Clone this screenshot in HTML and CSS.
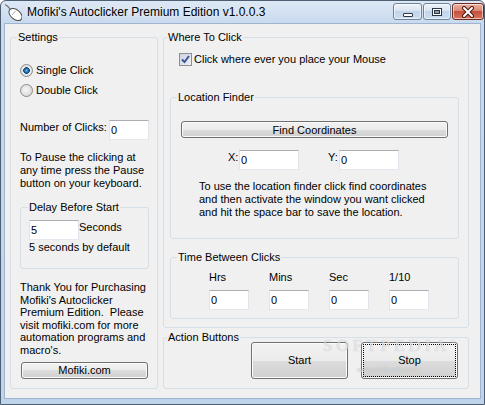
FILE: index.html
```html
<!DOCTYPE html>
<html lang="en">
<head>
  <meta charset="UTF-8" />
  <meta name="viewport" content="width=device-width, initial-scale=1.0" />
  <title>Mofiki's Autoclicker Premium Edition v1.0.0.3</title>
  <link rel="stylesheet" href="styles.css">
</head>
<body>
  <div class="window">

    <!-- Title bar -->
    <div class="titlebar">
      <svg class="app-icon" width="18" height="18" viewBox="0 0 18 18">
        <path d="M6.5 6.5 C5 4.5, 3.5 2.5, 1 1.5" fill="none" stroke="#707070" stroke-width="1.2"/>
        <ellipse cx="11.5" cy="11.5" rx="7.5" ry="4.8" transform="rotate(40 11.5 11.5)" fill="#fff" stroke="#4f4f4f"/>
        <path d="M8 12 L11.5 8" stroke="#a8a8a8"/>
      </svg>
      <span class="title">Mofiki's Autoclicker Premium Edition v1.0.0.3</span>
      <div class="caption-buttons">
        <span class="cap-btn min">
          <svg width="12" height="12" viewBox="0 0 12 12"><rect x="1.5" y="7.5" width="9" height="3" rx="0.5" fill="#fff" stroke="#2b3646"/></svg>
        </span>
        <span class="cap-btn max">
          <svg width="12" height="12" viewBox="0 0 12 12"><rect x="1.5" y="2.5" width="9" height="7" fill="#fff" stroke="#2b3646"/><rect x="3.5" y="4.5" width="5" height="3" fill="#8d9aab" stroke="#2b3646"/></svg>
        </span>
        <span class="cap-btn close">
          <svg width="14" height="12" viewBox="0 0 14 12"><path d="M3 2 L11 10 M11 2 L3 10" stroke="#4a1a12" stroke-width="4" stroke-linecap="round"/><path d="M3 2 L11 10 M11 2 L3 10" stroke="#fff" stroke-width="2" stroke-linecap="round"/></svg>
        </span>
      </div>
    </div>

    <div class="client">

      <!-- Left column -->
      <fieldset class="group settings">
        <legend>Settings</legend>

        <div class="options">
          <label class="option"><input type="radio" name="clicktype" class="radio" checked> Single Click</label>
          <label class="option"><input type="radio" name="clicktype" class="radio"> Double Click</label>
        </div>

        <div class="field-row">
          <label>Number of Clicks:</label>
          <input type="text" class="textbox" value="0">
        </div>

        <p class="note">To Pause the clicking at<br>any time press the Pause<br>button on your keyboard.</p>

        <fieldset class="group delay">
          <legend>Delay Before Start</legend>
          <div class="delay-row">
            <input type="text" class="textbox" value="5">
            <label>Seconds</label>
          </div>
          <p class="delay-note">5 seconds by default</p>
        </fieldset>

        <p class="thanks">Thank You for Purchasing<br>Mofiki's Autoclicker<br>Premium Edition.&nbsp; Please<br>visit mofiki.com for more<br>automation programs and<br>macro's.</p>

        <button class="btn btn-small site-btn">Mofiki.com</button>
      </fieldset>

      <!-- Right column -->
      <div class="right-col">
        <fieldset class="group where">
          <legend>Where To Click</legend>

          <label class="check-row">
            <span class="checkbox">
              <svg width="11" height="11" viewBox="0 0 11 11"><path d="M2 5.5 L4.5 8 L9 2" fill="none" stroke="#3d5393" stroke-width="2"/></svg>
            </span>
            Click where ever you place your Mouse
          </label>

          <fieldset class="group finder">
            <legend>Location Finder</legend>
            <button class="btn btn-small find-btn">Find Coordinates</button>
            <div class="coord-row">
              <div class="coord"><label>X:</label><input type="text" class="textbox" value="0"></div>
              <div class="coord"><label>Y:</label><input type="text" class="textbox" value="0"></div>
            </div>
            <p class="finder-note">To use the location finder click find coordinates<br>and then activate the window you want clicked<br>and hit the space bar to save the location.</p>
          </fieldset>

          <fieldset class="group timing">
            <legend>Time Between Clicks</legend>
            <div class="time-grid">
              <div class="time-cell"><label>Hrs</label><input type="text" class="textbox" value="0"></div>
              <div class="time-cell"><label>Mins</label><input type="text" class="textbox" value="0"></div>
              <div class="time-cell"><label>Sec</label><input type="text" class="textbox" value="0"></div>
              <div class="time-cell"><label>1/10</label><input type="text" class="textbox" value="0"></div>
            </div>
          </fieldset>
        </fieldset>

        <fieldset class="group actions">
          <legend>Action Buttons</legend>
          <div class="action-row">
            <button class="btn btn-big">Start</button>
            <button class="btn btn-big focused">Stop</button>
          </div>
          <!-- watermark that sits over the buttons -->
          <div class="watermark">
            <span class="wm-big">SOFTPEDIA<sup>®</sup></span>
            <span class="wm-small">www.softpedia.com</span>
          </div>
        </fieldset>
      </div>

    </div>
  </div>
</body>
</html>
```

FILE: styles.css
```css
* {
  box-sizing: border-box;
}
body {
  margin: 0;
  width: 485px;
  height: 405px;
  overflow: hidden;
  font-family: "Liberation Sans", Arial, sans-serif;
  font-size: 11px;
  line-height: 13px;
  color: #000;
  background: #fff;
}
p {
  margin: 0;
}

/* window frame */
.window {
  height: 405px;
  display: flex;
  flex-direction: column;
  border: 1px solid #4d5d72;
  border-radius: 6px 6px 0 0;
  background: linear-gradient(#dde8f5, #c9daee 22px, #bfd3eb);
}
.titlebar {
  height: 22px;
  display: flex;
  align-items: center;
  padding-left: 3px;
}
.app-icon {
  margin-right: 5px;
}
.title {
  font-size: 12px;
  line-height: 16px;
  text-shadow: 0 0 6px rgba(255, 255, 255, 0.9);
}
.caption-buttons {
  margin-left: auto;
  align-self: flex-start;
  margin-top: 2px;
  display: flex;
  gap: 1px;
}
.cap-btn {
  height: 17px;
  display: flex;
  align-items: center;
  justify-content: center;
  border: 1px solid #71839b;
  border-radius: 3px;
  background: linear-gradient(#eef3fa, #d9e4f1 45%, #c2d4ea 50%, #cfdef0);
  box-shadow: inset 0 0 0 1px rgba(255, 255, 255, 0.55);
}
.cap-btn.min { width: 29px; }
.cap-btn.max { width: 28px; }
.cap-btn.close {
  width: 32px;
  border-color: #6e2c22;
  background: linear-gradient(#eab0a0, #d98a76 45%, #c5503c 50%, #d6765e);
}

/* client area */
.client {
  flex: 1;
  margin: 0 3px 5px 3px;
  padding: 7px 11px 0 5px;
  background: #f0f0f0;
  border: 1px solid #9fb4cf;
  display: grid;
  grid-template-columns: 148px 306px;
  grid-template-rows: 358px;
  column-gap: 5px;
}

/* group boxes */
.group {
  margin: 0;
  padding: 0;
  min-width: 0;
  border: 1px solid #d5dfe5;
  border-radius: 3px;
}
.group legend {
  padding: 0 1px;
  line-height: 13px;
}

/* controls */
.textbox {
  width: 40px;
  height: 20px;
  margin: 0;
  padding: 0 1px;
  font: inherit;
  color: #000;
  background: #fff;
  border: 1px solid #e2e3ea;
  border-top-color: #abadb3;
  border-bottom-color: #e3e9ef;
  outline: none;
}
.btn {
  margin: 0;
  padding: 0;
  font: inherit;
  color: #000;
  border: 1px solid #707070;
  border-radius: 3px;
  background: linear-gradient(#f2f2f2, #ebebeb 50%, #dddddd 50%, #cfcfcf);
  box-shadow: inset 0 0 0 1px #fbfbfb;
}
.btn-small {
  height: 17px;
  line-height: 14px;
}
.btn-big {
  width: 97px;
  height: 37px;
}
.btn.focused {
  outline: 1px dotted #000;
  outline-offset: -3px;
}
.radio {
  appearance: none;
  margin: 0;
  width: 13px;
  height: 13px;
  border-radius: 50%;
  border: 1px solid #8a8a8a;
  background: radial-gradient(circle at 45% 45%, #f7f7f7, #dadada 75%, #cdcdcd);
}
.radio:checked {
  background: radial-gradient(circle at 50% 50%, #6cbcf0 0, #2d7fc2 1.5px, #0c3f76 3px, #eaeaea 3.6px, #d6d6d6);
}
.checkbox {
  width: 13px;
  height: 13px;
  display: flex;
  align-items: center;
  justify-content: center;
  border: 1px solid #8e8f8f;
  background: linear-gradient(135deg, #cfd3e3, #eef0f6);
}

/* settings column */
.settings {
  padding: 0 8px 0 9px;
}
.settings > legend {
  margin-left: -3px;
}
.options {
  margin-top: 16px;
}
.option {
  display: flex;
  align-items: center;
  gap: 3px;
  height: 20px;
}
.field-row {
  display: flex;
  align-items: flex-start;
  margin-top: 20px;
}
.field-row label {
  margin-top: 1px;
}
.field-row .textbox {
  margin-left: auto;
}
.note {
  margin-top: 11px;
}
.delay {
  margin-top: 11px;
  padding: 0 8px 14px 8px;
}
.delay > legend {
  margin-left: -1px;
}
.delay-row {
  display: flex;
  align-items: flex-start;
  margin-top: 6px;
}
.delay-row .textbox {
  width: 50px;
}
.delay-row label {
  margin-top: 1px;
}
.delay-note {
  margin-top: 1px;
}
.thanks {
  margin-top: 12px;
  line-height: 12.6px;
}
.site-btn {
  display: block;
  width: 127px;
  margin: 5px 0 0 1px;
}

/* right column */
.right-col {
  display: flex;
  flex-direction: column;
  gap: 3px;
}
.where {
  padding: 0 9px 8px 6px;
}
.where > legend {
  margin-left: -3px;
}
.check-row {
  display: flex;
  align-items: center;
  gap: 2px;
  height: 13px;
  margin: 9px 0 0 9px;
}
.finder {
  margin-top: 25px;
  padding: 0 10px 19px;
}
.finder > legend,
.timing > legend {
  margin-left: -4px;
}
.find-btn {
  display: block;
  width: 100%;
  margin-top: 17px;
}
.coord-row {
  display: flex;
  margin: 12px 0 0 47px;
}
.coord {
  display: flex;
  align-items: flex-start;
}
.coord + .coord {
  margin-left: 29px;
}
.coord label {
  width: 11px;
  margin-top: 1px;
}
.coord .textbox {
  width: 60px;
}
.finder-note {
  margin: 10px 0 0 18px;
  white-space: nowrap;
}
.timing {
  margin-top: 12px;
  padding: 0 10px 8px;
}
.time-grid {
  display: grid;
  grid-template-columns: repeat(4, 40px);
  column-gap: 20px;
  margin-left: 28px;
}
.time-cell label {
  display: block;
  margin-top: 7px;
}
.time-cell .textbox {
  margin-top: 6px;
}
.actions {
  position: relative;
  padding: 0 10px 9px 0;
}
.actions > legend {
  margin-left: 3px;
}
.action-row {
  display: flex;
  justify-content: flex-end;
  gap: 13px;
  margin-top: -2px;
}

/* softpedia watermark over the buttons */
.watermark {
  position: absolute;
  left: 159px;
  top: -4px;
  pointer-events: none;
}
.wm-big {
  display: block;
  font-family: "Liberation Serif", "Times New Roman", serif;
  font-size: 17px;
  line-height: 12px;
  letter-spacing: 4px;
  color: rgba(255, 255, 255, 0.6);
  text-shadow: 0 0 1px rgba(110, 110, 110, 0.45);
}
.wm-big sup {
  font-size: 6px;
  line-height: 0;
  letter-spacing: 0;
}
.wm-small {
  display: block;
  margin: 13px 0 0 34px;
  font-size: 8px;
  line-height: 9px;
  letter-spacing: -0.4px;
  color: rgba(255, 255, 255, 0.55);
  text-shadow: 0 0 1px rgba(110, 110, 110, 0.5);
}
```
